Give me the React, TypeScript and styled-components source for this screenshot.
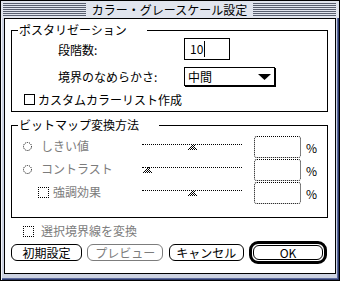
import styled, { createGlobalStyle } from "styled-components";

const GlobalStyle = createGlobalStyle`
  html, body {
    margin: 0;
    padding: 0;
    background: #fff;
  }
  body {
    font-family: "Noto Sans CJK JP", "Noto Sans", sans-serif;
    font-size: 12px;
    color: #000;
  }
  * {
    box-sizing: border-box;
  }
`;

// 変換方法の行データ
interface convRow {
  label: string;
  kind: "radio" | "check";
  thumb: number;
}

const convRows: convRow[] = [
  { label: "しきい値", kind: "radio", thumb: 46 },
  { label: "コントラスト", kind: "radio", thumb: 1 },
  { label: "強調効果", kind: "check", thumb: 46 },
];

const Thumb = ({ left }: { left: number }) => (
  <ThumbSvg style={{ left }} width="10" height="7" viewBox="0 0 10 7">
    <defs>
      <pattern id="dither" width="2" height="2" patternUnits="userSpaceOnUse">
        <rect x="0" y="0" width="1" height="1" fill="#000" />
        <rect x="1" y="1" width="1" height="1" fill="#000" />
      </pattern>
    </defs>
    <polygon points="5,0 10,7 0,7" fill="url(#dither)" shapeRendering="crispEdges" />
  </ThumbSvg>
);

const Radio = () => (
  <svg width="9" height="9" viewBox="0 0 9 9">
    <circle cx="4.5" cy="4.5" r="4" fill="none" stroke="#000" strokeDasharray="1 1" />
  </svg>
);

const App = () => {
  return (
    <>
      <GlobalStyle />
      <Window>
        <TitleBar>
          <Stripes />
          <Title>カラー・グレースケール設定</Title>
          <Stripes />
        </TitleBar>
        <Body>
          <Content>
            <Group>
              <Legend>ポスタリゼーション</Legend>
              <GroupBody $top={1} $bottom={5}>
                <FieldRow>
                  <FieldLabel>段階数:</FieldLabel>
                  <TextBox>
                    10
                    <Caret />
                  </TextBox>
                </FieldRow>
                <FieldRow $gap={7}>
                  <FieldLabel>境界のなめらかさ:</FieldLabel>
                  <Popup>
                    <span>中間</span>
                    <svg width="13" height="6" viewBox="0 0 13 6">
                      <polygon points="0,0 13,0 6.5,6" fill="#000" />
                    </svg>
                  </Popup>
                </FieldRow>
                <CheckRow $indent={12} $gap={6}>
                  <CheckBox />
                  <span>カスタムカラーリスト作成</span>
                </CheckRow>
              </GroupBody>
            </Group>

            <Group $gap={6}>
              <Legend>ビットマップ変換方法</Legend>
              <GroupBody $top={4} $bottom={12}>
                {convRows.map((row: convRow, i: number) => {
                  return (
                    <ConvRow key={i}>
                      <OptionItem $indent={row.kind === "radio" ? 11 : 26}>
                        {row.kind === "radio" ? <Radio /> : <DottedBox />}
                        <OptionText $space={row.kind === "radio" ? 9 : 4}>
                          {row.label}
                        </OptionText>
                      </OptionItem>
                      <Slider>
                        <Thumb left={row.thumb} />
                      </Slider>
                      <ValueBox />
                      <Pct>%</Pct>
                    </ConvRow>
                  );
                })}
              </GroupBody>
            </Group>

            <FooterCheck>
              <DottedBox />
              <OptionText $space={7}>選択境界線を変換</OptionText>
            </FooterCheck>

            <ButtonRow>
              <Button $width={71}>初期設定</Button>
              <Button $width={76} $disabled>
                プレビュー
              </Button>
              <Button $width={75}>キャンセル</Button>
              <DefaultRing>
                <Button $width={70} $height={15}>
                  OK
                </Button>
              </DefaultRing>
            </ButtonRow>
          </Content>
        </Body>
      </Window>
    </>
  );
};

const Window = styled.div`
  width: 340px;
  height: 281px;
  border: 1px solid #000;
  background: #cdd3e2;
  box-shadow: inset 1px 1px 0 #f2f4f9, inset -1px -1px 0 #2c3868,
    inset -2px -2px 0 #5b6a9e;
  display: flex;
  flex-direction: column;
`;

const TitleBar = styled.div`
  height: 17px;
  display: flex;
  align-items: flex-start;
  padding: 2px 3px 0 2px;
  background: #e1e5ee;
`;

const Stripes = styled.div`
  flex: 1;
  height: 13px;
  background: repeating-linear-gradient(
    to bottom,
    #585e6e 0,
    #585e6e 1px,
    transparent 1px,
    transparent 2px
  );
`;

const Title = styled.div`
  padding: 0 6px;
  line-height: 14px;
  font-size: 12px;
  white-space: nowrap;
`;

const Body = styled.div`
  flex: 1;
  display: flex;
  padding: 0 3px 6px 3px;
`;

const Content = styled.div`
  flex: 1;
  border: 1px solid #000;
  background: #fff;
  padding: 4px 7px 0 6px;
  display: flex;
  flex-direction: column;
`;

const Group = styled.fieldset<{ $gap?: number }>`
  margin: ${(p) => p.$gap ?? 0}px 0 0 0;
  padding: 0;
  border: 1px solid #000;
  min-width: 0;
`;

const Legend = styled.legend`
  margin-left: 6px;
  padding: 0 20px 0 1px;
  line-height: 14px;
  font-size: 12px;
`;

const GroupBody = styled.div<{ $top: number; $bottom: number }>`
  padding: ${(p) => p.$top}px 0 ${(p) => p.$bottom}px 0;
  display: flex;
  flex-direction: column;
`;

const FieldRow = styled.div<{ $gap?: number }>`
  display: flex;
  align-items: center;
  padding-left: 46px;
  margin-top: ${(p) => p.$gap ?? 0}px;
`;

const FieldLabel = styled.span`
  width: 126px;
  white-space: nowrap;
`;

const TextBox = styled.div`
  width: 46px;
  height: 22px;
  border: 1px solid #000;
  padding-left: 5px;
  display: flex;
  align-items: center;
  line-height: 14px;
`;

const Caret = styled.span`
  display: inline-block;
  width: 1px;
  height: 16px;
  margin-left: 1px;
  background: #000;
`;

const Popup = styled.div`
  width: 91px;
  height: 19px;
  border: 1px solid #000;
  box-shadow: 1px 1px 0 #000;
  display: flex;
  align-items: center;
  justify-content: space-between;
  padding: 0 3px 0 3px;
  line-height: 14px;
`;

const CheckRow = styled.div<{ $indent: number; $gap: number }>`
  display: flex;
  align-items: center;
  height: 14px;
  gap: 3px;
  padding-left: ${(p) => p.$indent}px;
  margin-top: ${(p) => p.$gap}px;
  white-space: nowrap;
`;

const CheckBox = styled.span`
  width: 11px;
  height: 11px;
  border: 1px solid #000;
  flex: none;
`;

const DottedBox = styled.span`
  width: 11px;
  height: 11px;
  border: 1px dotted #000;
  flex: none;
`;

const ConvRow = styled.div`
  display: flex;
  align-items: flex-start;
  height: 23px;
`;

const OptionItem = styled.div<{ $indent: number }>`
  width: 130px;
  height: 14px;
  margin-top: 3px;
  padding-left: ${(p) => p.$indent}px;
  display: flex;
  align-items: center;
`;

const OptionText = styled.span<{ $space: number }>`
  margin-left: ${(p) => p.$space}px;
  color: #7c7c7c;
  white-space: nowrap;
  line-height: 14px;
`;

const Slider = styled.div`
  position: relative;
  width: 100px;
  height: 8px;
  margin-top: 8px;
  border-top: 1px dotted #000;
`;

const ThumbSvg = styled.svg`
  position: absolute;
  top: -2px;
`;

const ValueBox = styled.div`
  width: 47px;
  height: 22px;
  margin-left: 12px;
  border: 1px dotted #000;
  border-radius: 3px;
`;

const Pct = styled.span`
  margin-left: 5px;
  align-self: center;
  line-height: 14px;
`;

const FooterCheck = styled.div`
  display: flex;
  align-items: center;
  height: 14px;
  margin: 6px 0 0 12px;
`;

const ButtonRow = styled.div`
  display: flex;
  align-items: center;
  justify-content: space-between;
  height: 23px;
  width: 316px;
  margin-top: 3px;
`;

const Button = styled.div<{ $width: number; $height?: number; $disabled?: boolean }>`
  width: ${(p) => p.$width}px;
  height: ${(p) => p.$height ?? 17}px;
  border: 1px solid ${(p) => (p.$disabled ? "#7c7c7c" : "#000")};
  border-radius: 6px;
  color: ${(p) => (p.$disabled ? "#7c7c7c" : "#000")};
  display: flex;
  align-items: center;
  justify-content: center;
  line-height: 14px;
  white-space: nowrap;
  background: #fff;
`;

const DefaultRing = styled.div`
  width: 78px;
  height: 23px;
  border: 3px solid #000;
  border-radius: 9px;
  padding: 1px;
  display: flex;
`;

export default App;
